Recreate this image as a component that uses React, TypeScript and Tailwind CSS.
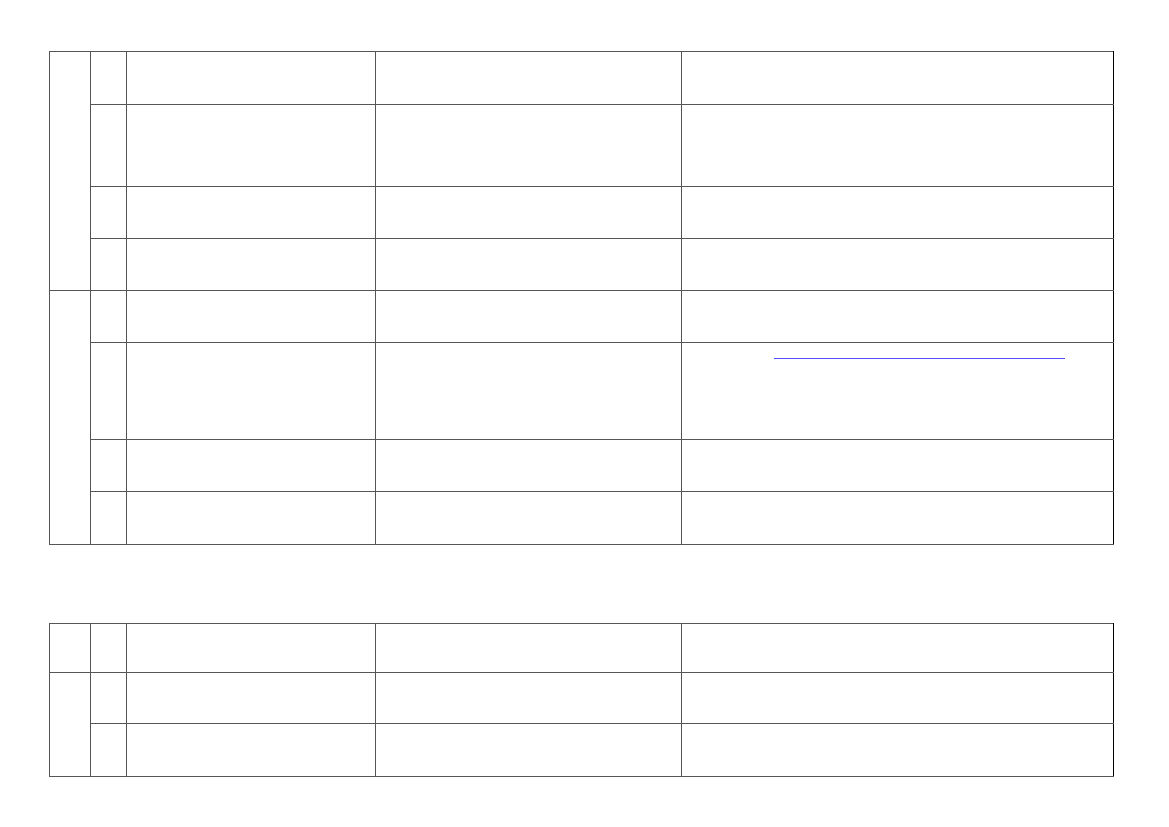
import React from 'react';

type Row = { h: string; group?: number; link?: boolean };

const cell = 'border border-[#555] p-0 align-top';

const Sheet = ({ rows, spans }: { rows: Row[]; spans: Record<number, number> }) => (
    <table className="table-fixed border-collapse w-[1064px] border border-[#555]">
        <colgroup>
            <col className="w-[41px]" />
            <col className="w-[36px]" />
            <col className="w-[249px]" />
            <col className="w-[306px]" />
            <col className="w-[432px]" />
        </colgroup>
        <tbody>
            {rows.map((row, idx) => (
                <tr key={idx} className={row.h}>
                    {spans[idx] !== undefined && <td rowSpan={spans[idx]} className={cell}></td>}
                    <td className={`${cell} border-l-[#999]`}></td>
                    <td className={cell}></td>
                    <td className={cell}></td>
                    <td className={`${cell} border-r-black`}>
                        {row.link && (
                            <div className="pt-[15px] pl-[92px]">
                                <span className="block w-[291px] h-px bg-[#5050ff]"></span>
                            </div>
                        )}
                    </td>
                </tr>
            ))}
        </tbody>
    </table>
);

const App = () => {
    const first: Row[] = [
        { h: 'h-[53px]' },
        { h: 'h-[82px]' },
        { h: 'h-[52px]' },
        { h: 'h-[52px]' },
        { h: 'h-[52px]' },
        { h: 'h-[97px]', link: true },
        { h: 'h-[52px]' },
        { h: 'h-[53px]' },
    ];
    const second: Row[] = [{ h: 'h-[49px]' }, { h: 'h-[51px]' }, { h: 'h-[53px]' }];

    return (
        <div className="min-h-screen bg-white pt-[51px] pl-[49px] font-['Liberation_Sans',sans-serif] text-white">
            <Sheet rows={first} spans={{ 0: 4, 4: 4 }} />
            <div className="h-[78px]"></div>
            <Sheet rows={second} spans={{ 0: 1, 1: 2 }} />
        </div>
    );
};

export default App;
